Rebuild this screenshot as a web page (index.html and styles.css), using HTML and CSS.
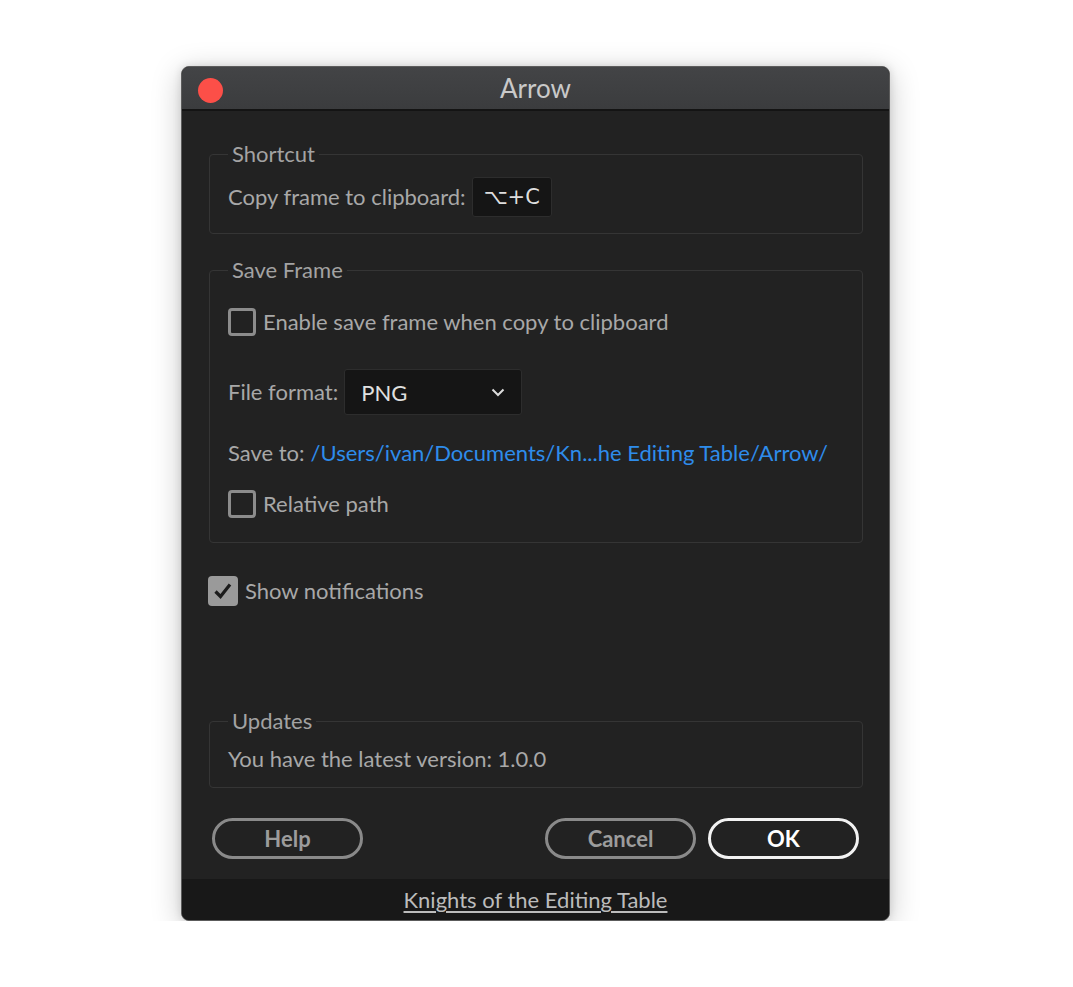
FILE: index.html
```html
<!DOCTYPE html>
<html>
<head>
<meta charset="utf-8">
<link rel="stylesheet" href="styles.css">
</head>
<body>
<div class="window">
  <div class="titlebar">
    <span class="close"></span>
    <span class="title">Arrow</span>
  </div>
  <div class="content">
    <fieldset class="group group-shortcut">
      <legend>Shortcut</legend>
      <div class="row">
        <span class="label">Copy frame to clipboard:</span>
        <span class="keybox">⌥+C</span>
      </div>
    </fieldset>

    <fieldset class="group group-save">
      <legend>Save Frame</legend>
      <label class="row check-row">
        <span class="checkbox"></span>
        <span class="label">Enable save frame when copy to clipboard</span>
      </label>
      <div class="row format-row">
        <span class="label">File format:</span>
        <span class="select">
          <span>PNG</span>
          <svg width="14" height="9" viewBox="0 0 14 9"><path d="M1.5 1.5 L7 7 L12.5 1.5" fill="none" stroke="#dcdcdc" stroke-width="2"/></svg>
        </span>
      </div>
      <div class="row path-row">
        <span class="label">Save to:</span>
        <a class="path">/Users/ivan/Documents/Kn...he Editing Table/Arrow/</a>
      </div>
      <label class="row check-row rel-row">
        <span class="checkbox"></span>
        <span class="label">Relative path</span>
      </label>
    </fieldset>

    <label class="row notify-row">
      <span class="checkbox checked">
        <svg width="22" height="20" viewBox="0 0 22 20"><path d="M3.5 10.5 L8.5 15.5 L18 3.5" fill="none" stroke="#1c1c1c" stroke-width="3.2"/></svg>
      </span>
      <span class="label">Show notifications</span>
    </label>

    <fieldset class="group group-updates">
      <legend>Updates</legend>
      <div class="row">
        <span class="label">You have the latest version: 1.0.0</span>
      </div>
    </fieldset>

    <div class="buttons">
      <button class="btn">Help</button>
      <span class="spacer"></span>
      <button class="btn">Cancel</button>
      <button class="btn btn-primary">OK</button>
    </div>
  </div>
  <div class="footer">
    <a class="footer-link">Knights of the Editing Table</a>
  </div>
</div>
</body>
</html>
```

FILE: styles.css
```css
html, body {
  margin: 0;
  padding: 0;
  background: #ffffff;
}
body {
  padding: 66px 0 0 181px;
  font-family: Lato, "Noto Sans", "Liberation Sans", sans-serif;
}
.window {
  width: 707px;
  height: 853px;
  border: 1px solid #5c5c5c;
  border-radius: 8px;
  background: #222222;
  box-shadow: 0 6px 30px rgba(0,0,0,0.22), 0 0 8px rgba(0,0,0,0.12);
  display: flex;
  flex-direction: column;
  overflow: hidden;
}
.titlebar {
  height: 42px;
  background: linear-gradient(#434446, #3b3c3e);
  border-bottom: 2px solid #141414;
  display: flex;
  align-items: center;
  justify-content: center;
  position: relative;
  flex: none;
}
.close {
  position: absolute;
  left: 16px;
  top: 11px;
  width: 25px;
  height: 25px;
  border-radius: 50%;
  background: #fc4f48;
}
.title {
  color: #c9c9c9;
  font-size: 26px;
  line-height: 28px;
}
.content {
  flex: 1;
  display: flex;
  flex-direction: column;
  padding: 0 26px 0 27px;
}
.group {
  margin: 0;
  border: 1px solid #353535;
  border-radius: 4px;
  padding: 0 18px;
  min-width: 0;
}
.group legend {
  padding: 0 4px;
  margin-left: 0;
  font-size: 22px;
  line-height: 26px;
  color: #a3a3a3;
}
.row {
  display: flex;
  align-items: center;
}
.label {
  color: #a8a8a8;
  font-size: 22px;
  line-height: 26px;
}
.group-shortcut {
  margin-top: 30px;
  padding-top: 10px;
  padding-bottom: 16px;
}
.keybox {
  margin-left: 6px;
  width: 78px;
  height: 38px;
  background: #151515;
  border: 1px solid #2d2d2d;
  border-radius: 3px;
  display: flex;
  align-items: center;
  justify-content: center;
  color: #dedede;
  font-size: 21px;
  font-family: "DejaVu Sans", Lato, sans-serif;
}
.group-save {
  margin-top: 23px;
  padding-top: 25px;
  padding-bottom: 24px;
}
.check-row {
  height: 28px;
}
.checkbox {
  width: 22px;
  height: 22px;
  border: 3px solid #8c8c8c;
  border-radius: 4px;
  margin-right: 7px;
  flex: none;
  display: flex;
  align-items: center;
  justify-content: center;
}
.format-row {
  margin-top: 33px;
}
.select {
  margin-left: 6px;
  height: 44px;
  padding: 0 0 0 16px;
  width: 160px;
  background: #151515;
  border: 1px solid #2d2d2d;
  border-radius: 3px;
  display: flex;
  align-items: center;
  justify-content: space-between;
  color: #e0e0e0;
  font-size: 22px;
}
.select svg {
  margin-right: 16px;
}
.path-row {
  margin-top: 24px;
  height: 28px;
}
.path {
  margin-left: 6px;
  color: #2e8ceb;
  font-size: 22px;
  line-height: 26px;
}
.rel-row {
  margin-top: 23px;
}
.notify-row {
  margin-top: 33px;
  margin-left: -1px;
  height: 30px;
}
.checkbox.checked {
  width: 30px;
  height: 30px;
  border: none;
  background: #9a9a9a;
  margin-right: 7px;
}
.group-updates {
  margin-top: 102px;
  padding-top: 12px;
  padding-bottom: 15px;
}
.buttons {
  margin-top: 30px;
  display: flex;
  padding: 0 4px 0 3px;
  gap: 12px;
}
.spacer {
  flex: 1;
}
.btn {
  width: 151px;
  height: 41px;
  border: 3px solid #8a8a8a;
  border-radius: 21px;
  background: transparent;
  color: #9c9c9c;
  font-family: inherit;
  font-weight: bold;
  font-size: 22px;
  padding: 0;
}
.btn-primary {
  border-color: #f2f2f2;
  color: #ffffff;
}
.footer {
  flex: none;
  height: 41px;
  background: #181818;
  display: flex;
  align-items: center;
  justify-content: center;
}
.footer-link {
  color: #bcbcbc;
  font-size: 22px;
  text-decoration: underline;
  text-underline-offset: 3px;
}
```
